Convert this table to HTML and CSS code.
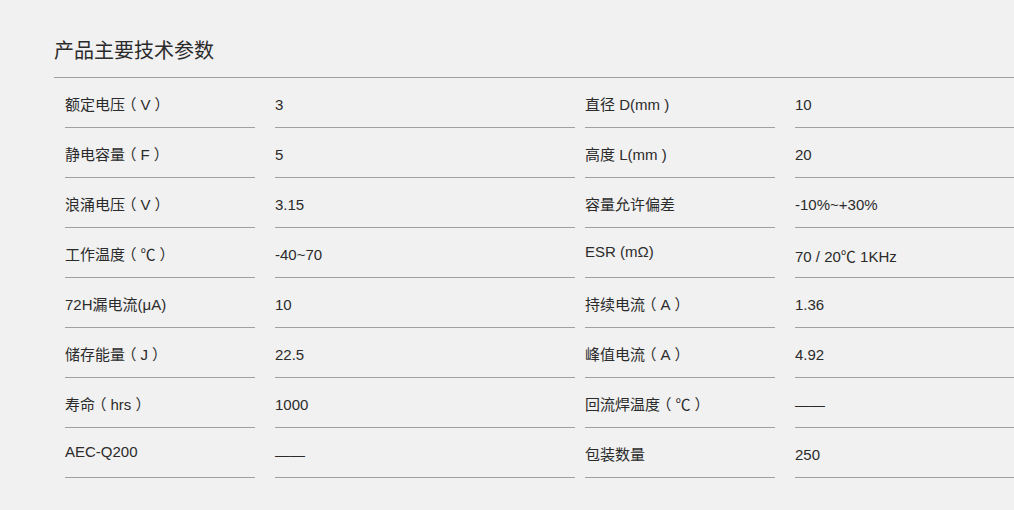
FILE: index.html
```html
<!DOCTYPE html>
<html lang="zh-CN">
<head>
<meta charset="utf-8">
<title>产品主要技术参数</title>
<link rel="stylesheet" href="styles.css">
</head>
<body>
<section class="params">
  <h2 class="params-title">产品主要技术参数</h2>
  <div class="params-table">
    <div class="row">
      <div class="cell key">额定电压<span class="fp">（</span>V<span class="fp">）</span></div>
      <div class="cell val">3</div>
      <div class="cell key">直径 D(mm )</div>
      <div class="cell val">10</div>
    </div>
    <div class="row">
      <div class="cell key">静电容量<span class="fp">（</span>F<span class="fp">）</span></div>
      <div class="cell val">5</div>
      <div class="cell key">高度 L(mm )</div>
      <div class="cell val">20</div>
    </div>
    <div class="row">
      <div class="cell key">浪涌电压<span class="fp">（</span>V<span class="fp">）</span></div>
      <div class="cell val">3.15</div>
      <div class="cell key">容量允许偏差</div>
      <div class="cell val">-10%~+30%</div>
    </div>
    <div class="row">
      <div class="cell key">工作温度<span class="fp">（</span>℃<span class="fp">）</span></div>
      <div class="cell val">-40~70</div>
      <div class="cell key up">ESR (mΩ)</div>
      <div class="cell val down">70 / 20℃ 1KHz</div>
    </div>
    <div class="row">
      <div class="cell key">72H漏电流(μA)</div>
      <div class="cell val">10</div>
      <div class="cell key">持续电流<span class="fp">（</span>A<span class="fp">）</span></div>
      <div class="cell val">1.36</div>
    </div>
    <div class="row">
      <div class="cell key">储存能量<span class="fp">（</span>J<span class="fp">）</span></div>
      <div class="cell val">22.5</div>
      <div class="cell key">峰值电流<span class="fp">（</span>A<span class="fp">）</span></div>
      <div class="cell val">4.92</div>
    </div>
    <div class="row">
      <div class="cell key">寿命<span class="fp">（</span>hrs<span class="fp">）</span></div>
      <div class="cell val">1000</div>
      <div class="cell key">回流焊温度<span class="fp">（</span>℃<span class="fp">）</span></div>
      <div class="cell val">——</div>
    </div>
    <div class="row">
      <div class="cell key up">AEC-Q200</div>
      <div class="cell val">——</div>
      <div class="cell key">包装数量</div>
      <div class="cell val">250</div>
    </div>
  </div>
</section>
</body>
</html>
```

FILE: styles.css
```css
html, body {
  margin: 0;
  padding: 0;
  background: #f1f1f1;
}

body {
  font-family: "Liberation Sans", "Noto Sans CJK SC", sans-serif;
  color: #2b2b2b;
  overflow: hidden;
}

.params {
  margin-left: 54px;
}

.params-title {
  margin: 0;
  padding: 37px 0 12px;
  font-size: 20px;
  line-height: 28px;
  font-weight: normal;
  color: #2b2b2b;
  border-bottom: 1px solid #a0a0a0;
}

.params-table {
  padding-left: 11px;
}

.row {
  display: flex;
}

.cell {
  box-sizing: border-box;
  height: 50px;
  padding-top: 17px;
  font-size: 15px;
  line-height: 20px;
  border-bottom: 1px solid #a0a0a0;
  white-space: nowrap;
}

.fp {
  font-feature-settings: "halt";
  padding: 0 4px;
}

.key {
  width: 190px;
  margin-right: 20px;
}

.val {
  width: 300px;
  margin-right: 10px;
}

.val:last-child {
  flex: 1;
  margin-right: 0;
}

.up {
  padding-top: 14px;
}

.down {
  padding-top: 19px;
}
```
